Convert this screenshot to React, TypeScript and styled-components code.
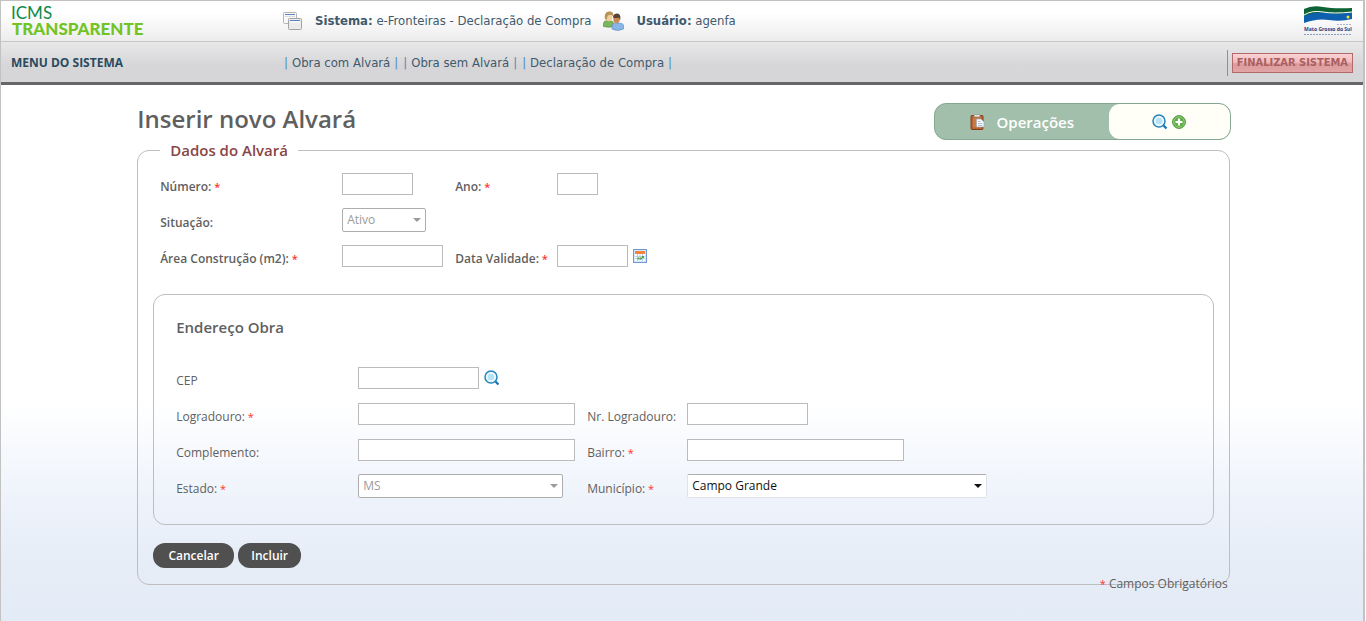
import React from "react";
import styled, { createGlobalStyle, css } from "styled-components";

const humanist = `"Open Sans", "Noto Sans", sans-serif`;
const wide = `"DejaVu Sans Condensed", "DejaVu Sans", sans-serif`;

const GlobalStyle = createGlobalStyle`
  * { box-sizing: border-box; }
  html { height: 100%; }
  body {
    margin: 0;
    min-height: 100%;
    font: 12px/16px ${humanist};
    color: #5f5f5f;
    background: #fff;
  }
`;

const Page = styled.div`
  min-height: 100vh;
  margin-right: 1px;
  border: solid #c2c2c2;
  border-width: 1px 2px 0 1px;
  background: linear-gradient(#fff 0, #fff 400px, #eef3fb 500px, #e6edf7 560px, #e3ebf6 621px);
`;

const TopBar = styled.header`
  display: grid;
  grid-template-columns: 272px 1fr auto;
  align-items: center;
  height: 41px;
  padding: 0 10px;
  border-bottom: 1px solid #c6c6c8;
  background: linear-gradient(#fff 30%, #ececec);
  font: 13px/16px ${wide};
  color: #3f5a6c;
`;

const Session = styled.div`
  display: flex;
  align-items: center;
  svg { flex: none; margin-right: 12px; }
`;

const SessionItem = styled.span`
  margin-right: 12px;
`;

const MenuBar = styled.nav`
  display: grid;
  grid-template-columns: 273px 1fr auto;
  align-items: center;
  height: 43px;
  padding: 1px 10px 0;
  border-bottom: 3px solid #666668;
  background: linear-gradient(#e8e8e9, #d6d6d8 60%, #d6d6d8);
  font: 13px/16px ${wide};
  color: #3f5a6c;
`;

const MenuTitle = styled.strong`
  font: bold 12px/16px ${humanist};
  color: #2a4a5e;
`;

const MenuLinks = styled.div`
  display: flex;
  gap: 5px;
`;

const MenuItem = styled.span`
  display: flex;
  gap: 4px;
`;

const MenuLink = styled.a`
  color: inherit;
  text-decoration: none;
`;

const Pipe = styled.span`
  color: #4d8cb8;
`;

const Finish = styled.div`
  padding: 3px 0 3px 4px;
  border-left: 1px solid #8f8f91;
`;

const FinishButton = styled.button`
  display: block;
  height: 20px;
  padding: 0 4px;
  border: 1px solid #b26a6c;
  background: linear-gradient(#fbd3d4, #f2b9bb 45%, #dc9b9d 55%, #e2a4a6);
  font: bold 11px/16px ${wide};
  color: #a86062;
  white-space: nowrap;
`;

const Content = styled.main`
  width: calc(80% + 3px);
  margin: 0 0 0 10%;
  padding: 18px 0 20px;
`;

const TitleRow = styled.div`
  display: flex;
  justify-content: space-between;
  height: 37px;
`;

const Title = styled.h1`
  margin: 0;
  font: 600 24px/32px ${humanist};
`;

const Operations = styled.div`
  display: flex;
  width: 297px;
  margin-right: -1px;
  border: 1px solid #86a892;
  border-radius: 12px;
  background: #a1bfaa;
  overflow: hidden;
`;

const OperationsLabel = styled.div`
  flex: 1;
  display: flex;
  align-items: center;
  justify-content: center;
  gap: 12px;
  font: 600 15px/20px ${humanist};
  color: #fff;
`;

const OperationsTools = styled.div`
  display: flex;
  align-items: center;
  justify-content: center;
  gap: 4px;
  width: 121px;
  border-radius: 11px;
  background: #fffff7;
`;

const IconButton = styled.button`
  display: block;
  padding: 0;
  border: 0;
  background: none;
  line-height: 0;
`;

const Panel = styled.fieldset`
  margin: 0;
  padding: 0 15px 16px;
  border: 1px solid #bebebe;
  border-radius: 12px;
`;

const PanelTitle = styled.legend`
  margin-left: 7px;
  padding: 0 10px;
  font: 600 15px/20px ${humanist};
  color: #894646;
`;

const Fields = styled.div<{ $inner?: boolean }>`
  display: grid;
  grid-template-columns: ${(p) => (p.$inner ? "182px 229px 100px 1fr" : "182px 113px 102px 1fr")};
  grid-auto-rows: 36px;
  align-items: center;
  ${(p) => !p.$inner && css`padding: 6px 7px 20px;`}
`;

const Label = styled.label<{ $bold?: boolean }>`
  padding-top: 6px;
  font-weight: ${(p) => (p.$bold ? 600 : 400)};
  white-space: nowrap;
`;

const Star = styled.span`
  font-size: 11px;
  color: #f33;
`;

const Cell = styled.div<{ $span?: boolean }>`
  display: flex;
  align-items: center;
  gap: 5px;
  ${(p) => p.$span && css`grid-column: span 3;`}
`;

const TextBox = styled.input<{ $w: number }>`
  width: ${(p) => p.$w}px;
  height: 22px;
  padding: 2px 4px;
  border: 1px solid #bbb;
  background: #fff;
  font: inherit;
`;

const SelectWrap = styled.div<{ $w: number; $off?: boolean }>`
  display: flex;
  align-items: center;
  width: ${(p) => p.$w}px;
  height: 24px;
  padding-right: 4px;
  border: 1px solid ${(p) => (p.$off ? "#adadad" : "#dfe3e8")};
  border-top-color: #adadad;
  border-radius: 2px;
  background: #fff;
  color: ${(p) => (p.$off ? "#9b9b9b" : "#111")};
`;

const Select = styled.select`
  flex: 1;
  appearance: none;
  height: 22px;
  padding: 0 4px;
  border: 0;
  background: transparent;
  font: inherit;
  color: inherit;
  opacity: 1;
`;

const Address = styled.section`
  padding: 22px 22px 20px;
  border: 1px solid #bebebe;
  border-radius: 12px;
`;

const AddressTitle = styled.h2`
  margin: 0 0 23px;
  font: 600 15px/20px ${humanist};
`;

const Actions = styled.div`
  display: flex;
  gap: 4px;
  margin-top: 18px;
`;

const ActionButton = styled.button<{ $w: number }>`
  width: ${(p) => p.$w}px;
  height: 25px;
  padding: 0;
  border: 0;
  border-radius: 12px;
  background: #505050;
  font: 600 12px/16px ${humanist};
  color: #fff;
`;

const Note = styled.p`
  margin: -9px 2px 0 0;
  text-align: right;
`;

const Logo = () => (
  <svg width="140" height="32" viewBox="0 0 140 32" role="img" aria-label="ICMS Transparente">
    <text x="0" y="14" fontFamily="Lato, sans-serif" fontSize="17" fill="#0d8a4c">ICMS</text>
    <text x="1" y="30" fontFamily="Lato, sans-serif" fontSize="17" fontWeight="900" fill="#72c425">TRANSPARENTE</text>
  </svg>
);

const WindowsIcon = () => (
  <svg width="20" height="19" viewBox="0 0 20 19" aria-hidden="true">
    <rect x=".5" y=".5" width="13" height="11" rx="1" fill="#f8f8f8" stroke="#b5b5b5" />
    <path d="M2 2.500h10" stroke="#5b85c2" />
    <path d="M2 4.500h10" stroke="#dcdcdc" />
    <rect x="5.500" y="6.500" width="13" height="11" rx="1" fill="#ebebeb" stroke="#a3a3a3" />
    <path d="M7 8.500h10" stroke="#5b85c2" />
    <path d="M7 10h10" stroke="#fff" />
  </svg>
);

const UsersIcon = () => (
  <svg width="21" height="20" viewBox="0 0 21 20" aria-hidden="true">
    <path d="M.5 15.500v-3c0-2 2-3 5-3s5 1 5 3v3q-5 1.500-10 0Z" fill="#7cb55c" stroke="#4f833f" strokeWidth=".6" />
    <ellipse cx="6" cy="6" rx="3.400" ry="4.200" fill="#f2cf9b" />
    <path d="M2 8C1 3 3 .500 6.500.500S11 3 10 5Q6 2.500 4.500 5.500L3.500 9Z" fill="#b8935a" />
    <path d="M9 18v-3c0-2 2-3 6-3s5.500 1 5.500 3v3q-6 3-11.500 0Z" fill="#8ab5e8" stroke="#5686bd" strokeWidth=".6" />
    <ellipse cx="13.500" cy="8" rx="3.200" ry="4.300" fill="#c98a58" />
    <path d="M10 6.500c0-3 2-4 4-4 3 0 4 3 3 7l-1-3q-3 1-6 0Z" fill="#5a4233" />
  </svg>
);

const StateLogo = () => (
  <svg width="50" height="32" viewBox="0 0 50 32" role="img" aria-label="Governo de Mato Grosso do Sul">
    <path d="M1 8Q10 4 20 6T49 7V14Q38 17 26 15T1 18Z" fill="#0e5fae" />
    <path d="M1 4Q9 0 20 2T49 3V7Q38 10 25 8T1 11Z" fill="#0d6334" />
    <path d="M1 10Q9 5 20 7T49 7" fill="none" stroke="#fff" />
    <circle cx="45" cy="12" r="1.500" fill="#f4e637" />
    <path d="M34 19.500h14" stroke="#a9b7d4" strokeDasharray="2 1" />
    <text x="25" y="26" textAnchor="middle" fontFamily="Open Sans, sans-serif" fontSize="5" fontWeight="700" fill="#253f83">Mato Grosso do Sul</text>
    <path d="M1 29.500h48" stroke="#8b9cc2" strokeDasharray="2 1" />
  </svg>
);

const SearchIcon = () => (
  <svg width="16" height="16" viewBox="0 0 16 16" aria-hidden="true">
    <circle cx="7" cy="7" r="6" fill="#edf8fe" stroke="#2585bb" strokeWidth="1.500" />
    <circle cx="7" cy="7" r="3.300" fill="#b5e3f5" />
    <path d="m11.500 11.500 3 3" stroke="#1477b5" strokeWidth="2.200" />
  </svg>
);

const AddIcon = () => (
  <svg width="14" height="14" viewBox="0 0 14 14" aria-hidden="true">
    <circle cx="7" cy="7" r="6.400" fill="#5cae43" stroke="#4b9640" />
    <circle cx="7" cy="7" r="5.300" fill="none" stroke="#a5d591" strokeWidth=".8" />
    <path d="M7 3.500v7M3.500 7h7" stroke="#fff" strokeWidth="2.200" />
  </svg>
);

const ClipboardIcon = () => (
  <svg width="15" height="16" viewBox="0 0 15 16" aria-hidden="true">
    <rect x="1" y="1.500" width="12" height="14" rx="1" fill="#b8622f" stroke="#87401f" />
    <rect x="3" y="3.500" width="8" height="10" fill="#c97a45" />
    <rect x="4" y=".500" width="6" height="2.500" rx="1" fill="#e4e4e4" stroke="#888" strokeWidth=".6" />
    <path d="M6.500 5h4.500l3 3v5H6.500Z" fill="#f4f7fb" stroke="#98a4b3" strokeWidth=".6" />
    <path d="M8 7.500h2.500M8 9.500h4.500M8 11.500h4.500" stroke="#9db2cc" strokeWidth=".8" />
  </svg>
);

const CalendarIcon = () => (
  <svg width="14" height="14" viewBox="0 0 14 14" aria-hidden="true">
    <rect x=".5" y=".5" width="13" height="13" fill="#d5e6fa" stroke="#6f9ad6" />
    <rect x="2" y="2" width="10" height="3" fill="#f0863f" />
    <rect x="2" y="5" width="10" height="7" fill="#fff" />
    <path d="M2 7.500h10M2 9.500h10M4.500 5v7M7 5v7M9.500 5v7" stroke="#a9bdd6" strokeWidth=".7" />
    <path d="M9 7h2v2H9ZM7 8.500h2v2H7ZM4.500 8.500h2v2h-2Z" fill="#4fa64b" />
  </svg>
);

const Arrow = () => (
  <svg width="8" height="4" viewBox="0 0 8 4" aria-hidden="true">
    <path d="M0 0h8L4 4Z" fill="currentColor" />
  </svg>
);

type LabelProps = { id: string; text: string; required?: boolean; bold?: boolean };

const FieldLabel = ({ id, text, required, bold }: LabelProps) => (
  <Label htmlFor={id} $bold={bold}>
    {text}
    {required && <Star> *</Star>}
  </Label>
);

type DropDownProps = { id: string; width: number; value: string; disabled?: boolean };

const DropDown = ({ id, width, value, disabled }: DropDownProps) => (
  <SelectWrap $w={width} $off={disabled}>
    <Select id={id} disabled={disabled}>
      <option>{value}</option>
    </Select>
    <Arrow />
  </SelectWrap>
);

const menu = ["Obra com Alvará", "Obra sem Alvará", "Declaração de Compra"];

export default function App() {
  return (
    <Page>
      <GlobalStyle />
      <TopBar>
        <Logo />
        <Session>
          <WindowsIcon />
          <SessionItem><b>Sistema:</b> e-Fronteiras - Declaração de Compra</SessionItem>
          <UsersIcon />
          <SessionItem><b>Usuário:</b> agenfa</SessionItem>
        </Session>
        <StateLogo />
      </TopBar>
      <MenuBar>
        <MenuTitle>MENU DO SISTEMA</MenuTitle>
        <MenuLinks>
          {menu.map((item) => (
            <MenuItem key={item}>
              <Pipe>|</Pipe>
              <MenuLink href="#">{item}</MenuLink>
              <Pipe>|</Pipe>
            </MenuItem>
          ))}
        </MenuLinks>
        <Finish>
          <FinishButton type="button">FINALIZAR SISTEMA</FinishButton>
        </Finish>
      </MenuBar>
      <Content>
        <TitleRow>
          <Title>Inserir novo Alvará</Title>
          <Operations>
            <OperationsLabel><ClipboardIcon />Operações</OperationsLabel>
            <OperationsTools>
              <IconButton type="button" aria-label="Pesquisar"><SearchIcon /></IconButton>
              <IconButton type="button" aria-label="Adicionar"><AddIcon /></IconButton>
            </OperationsTools>
          </Operations>
        </TitleRow>
        <form>
          <Panel>
            <PanelTitle>Dados do Alvará</PanelTitle>
            <Fields>
              <FieldLabel id="numero" text="Número:" required bold />
              <Cell><TextBox id="numero" $w={71} /></Cell>
              <FieldLabel id="ano" text="Ano:" required bold />
              <Cell><TextBox id="ano" $w={41} /></Cell>
              <FieldLabel id="situacao" text="Situação:" bold />
              <Cell $span><DropDown id="situacao" width={84} value="Ativo" disabled /></Cell>
              <FieldLabel id="area" text="Área Construção (m2):" required bold />
              <Cell><TextBox id="area" $w={101} /></Cell>
              <FieldLabel id="validade" text="Data Validade:" required bold />
              <Cell>
                <TextBox id="validade" $w={71} />
                <IconButton type="button" aria-label="Abrir calendário"><CalendarIcon /></IconButton>
              </Cell>
            </Fields>
            <Address>
              <AddressTitle>Endereço Obra</AddressTitle>
              <Fields $inner>
                <FieldLabel id="cep" text="CEP" />
                <Cell $span>
                  <TextBox id="cep" $w={121} />
                  <IconButton type="button" aria-label="Buscar CEP"><SearchIcon /></IconButton>
                </Cell>
                <FieldLabel id="logradouro" text="Logradouro:" required />
                <Cell><TextBox id="logradouro" $w={217} /></Cell>
                <FieldLabel id="nr" text="Nr. Logradouro:" />
                <Cell><TextBox id="nr" $w={121} /></Cell>
                <FieldLabel id="complemento" text="Complemento:" />
                <Cell><TextBox id="complemento" $w={217} /></Cell>
                <FieldLabel id="bairro" text="Bairro:" required />
                <Cell><TextBox id="bairro" $w={217} /></Cell>
                <FieldLabel id="estado" text="Estado:" required />
                <Cell><DropDown id="estado" width={205} value="MS" disabled /></Cell>
                <FieldLabel id="municipio" text="Município:" required />
                <Cell><DropDown id="municipio" width={300} value="Campo Grande" /></Cell>
              </Fields>
            </Address>
            <Actions>
              <ActionButton type="button" $w={81}>Cancelar</ActionButton>
              <ActionButton type="submit" $w={63}>Incluir</ActionButton>
            </Actions>
          </Panel>
        </form>
        <Note><Star>*</Star> Campos Obrigatórios</Note>
      </Content>
    </Page>
  );
}
